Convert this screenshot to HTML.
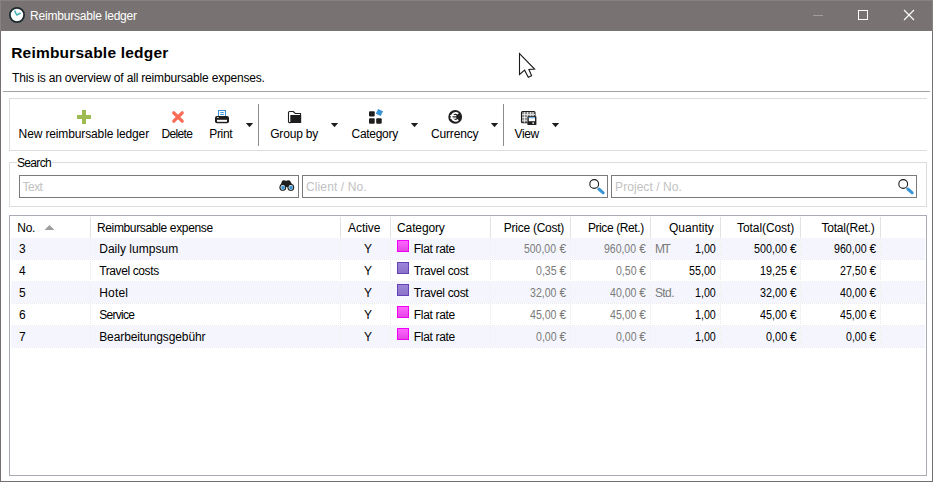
<!DOCTYPE html>
<html><head><meta charset="utf-8">
<style>
*{margin:0;padding:0;box-sizing:border-box}
html,body{width:933px;height:482px;overflow:hidden;background:#fff}
body{position:relative;font-family:"Liberation Sans",sans-serif;font-size:12px;color:#000}
.a{position:absolute;white-space:nowrap;line-height:14px;font-size:12px}
.ln{position:absolute}
svg{position:absolute;overflow:visible}
.arr{position:absolute;width:0;height:0;border-left:3.5px solid transparent;border-right:3.5px solid transparent;border-top:4px solid #1e1e1e}
.num{letter-spacing:-0.55px}
.g{color:#808080}
.dot{background-image:linear-gradient(90deg,#e9e9ec 50%,transparent 50%);background-size:2px 1px;background-position:1px 0}
.vdot{background-image:linear-gradient(180deg,#e8e8e8 50%,#fff 50%);background-size:1px 2px;background-position:0 1px}
.sm{border:1px solid #f000f0;background:linear-gradient(#ff66ff,#e446e4)}
.sp{border:1px solid #6640b6;background:linear-gradient(#9c86d8,#8a72c8)}
</style></head><body>
<!-- window frame -->
<div class="ln" style="left:0;top:0;width:933px;height:31px;background:#787372;border:1px solid #878282;border-bottom:none"></div>
<div class="ln" style="left:0;top:31px;width:1px;height:451px;background:#767170"></div>
<div class="ln" style="left:932px;top:31px;width:1px;height:451px;background:#767170"></div>
<div class="ln" style="left:0;top:481px;width:933px;height:1px;background:#767170"></div>
<!-- title icon -->
<svg style="left:0;top:0" width="40" height="31">
<circle cx="17" cy="15" r="7.1" fill="#fff" stroke="#1c2a30" stroke-width="1.8"/>
<path d="M14.6 10.6 L16.7 15 L20.6 13" fill="none" stroke="#3fb0b2" stroke-width="1.5" stroke-linejoin="round"/>
</svg>
<!-- window controls -->
<div class="ln" style="left:813px;top:15px;width:10px;height:1px;background:#a29c9c"></div>
<div class="ln" style="left:858px;top:10px;width:10px;height:10px;border:1px solid #fff"></div>
<svg style="left:0;top:0" width="933" height="31">
<path d="M904 10 L914 20 M914 10 L904 20" stroke="#fff" stroke-width="1.1"/>
</svg>
<!-- header -->
<div class="ln" style="left:3px;top:91px;width:927px;height:1px;background:#a0a0a0"></div>
<!-- toolbar -->
<div class="ln" style="left:9px;top:98px;width:918px;height:53px;border:1px solid #dcdcdc;border-right:none"></div>
<svg style="left:0;top:0" width="933" height="160">
<path d="M84 110 V124 M77 117 H91" stroke="#9dbb50" stroke-width="4"/>
<path d="M173.8 112.8 L182.2 121.2 M182.2 112.8 L173.8 121.2" stroke="#fb6b55" stroke-width="3.3" stroke-linecap="round"/>
<!-- printer -->
<rect x="218.5" y="110.5" width="7" height="6" fill="#fff" stroke="#3b90dc" stroke-width="1"/>
<path d="M220.3 112.6 H223.8 M220.3 114.5 H223.8" stroke="#3b90dc" stroke-width="1"/>
<rect x="215" y="116" width="14" height="7.3" rx="2" fill="#1e1e1e"/>
<rect x="217" y="119.8" width="10" height="2" fill="#fff"/>
<rect x="217" y="117" width="1.8" height="1" rx="0.5" fill="#ddd"/>
<!-- folder -->
<path d="M288.5 122 V112.5 Q288.5 111.5 289.5 111.5 H293.3 L295.2 113.5 H300.5 V115.5" fill="none" stroke="#1e1e1e" stroke-width="1.1"/>
<rect x="290.3" y="115" width="10.9" height="7.9" rx="0.5" fill="#1e1e1e"/>
<path d="M288.5 122 Q288.5 122.6 289.5 122.6 H291" fill="none" stroke="#1e1e1e" stroke-width="1.1"/>
<!-- category -->
<rect x="369" y="111.2" width="5.7" height="5.3" rx="1" fill="#1e1e1e"/>
<rect x="369" y="118.2" width="5.7" height="5.5" rx="1" fill="#1e1e1e"/>
<rect x="376.2" y="118.2" width="5.5" height="5.5" rx="1" fill="#1e1e1e"/>
<rect x="376.7" y="109.8" width="5.4" height="5.4" transform="rotate(25 379.4 112.5)" fill="#3a94d8"/>
<!-- currency -->
<circle cx="455.2" cy="116.9" r="6.9" fill="#1e1e1e"/>
<path d="M458.21 113.90 A3.9 3.9 0 1 0 458.21 119.70" fill="none" stroke="#fff" stroke-width="1.9"/>
<path d="M450.2 115.6 H456.3 M450.2 118.1 H456.3" stroke="#fff" stroke-width="1.2"/>
<!-- view -->
<rect x="521.5" y="111.5" width="13.5" height="11.2" rx="1" fill="#8c8c8c" stroke="#1e1e1e" stroke-width="1.1"/>
<path d="M524.5 112 V122.5 M527.5 112 V122.5 M530.5 112 V122.5 M533 112 V122.5 M522 114.5 H535 M522 117.5 H535 M522 120.3 H535" stroke="#e4e4e4" stroke-width="0.9"/>
<rect x="527.4" y="116.2" width="9" height="8.8" rx="0.6" fill="#1e1e1e"/>
<rect x="528.8" y="117.4" width="6.2" height="3.8" fill="#fff"/>
<rect x="528.8" y="117.2" width="6.2" height="1" fill="#5ab0e8"/>
<rect x="532.4" y="122.3" width="1.6" height="1.7" fill="#ddd"/>
</svg>
<div class="ln" style="left:258px;top:104px;width:1px;height:42px;background:#8c8c8c"></div>
<div class="ln" style="left:503px;top:104px;width:1px;height:42px;background:#8c8c8c"></div>
<svg style="left:0;top:0" width="933" height="140"><path d="M245.8 123 H253.2 L249.5 127.2 Z" fill="#1e1e1e"/><path d="M330.8 123 H338.2 L334.5 127.2 Z" fill="#1e1e1e"/><path d="M410.8 123 H418.2 L414.5 127.2 Z" fill="#1e1e1e"/><path d="M490.8 123 H498.2 L494.5 127.2 Z" fill="#1e1e1e"/><path d="M551.8 123 H559.2 L555.5 127.2 Z" fill="#1e1e1e"/></svg>
<!-- search group -->
<div class="ln" style="left:9px;top:162px;width:918px;height:45px;border:1px solid #dcdcdc"></div>
<div class="ln" style="left:17px;top:158px;width:35px;height:8px;background:#fff"></div>
<div class="ln" style="left:19px;top:175px;width:280px;height:23px;border:1px solid #7a7a7a"></div>
<div class="ln" style="left:302px;top:175px;width:306px;height:23px;border:1px solid #7a7a7a"></div>
<div class="ln" style="left:611px;top:175px;width:306px;height:23px;border:1px solid #7a7a7a"></div>
<svg style="left:0;top:0" width="933" height="210">
<!-- binoculars -->
<path d="M279.8 187 L282 181.2 Q282.5 180.3 283.6 180.3 L285.2 180.5 Q286.2 181.2 287 180.5 L288.7 180.3 Q289.8 180.3 290.3 181.2 L293.6 187 Z" fill="#1e1e1e"/>
<circle cx="282.8" cy="187.4" r="3.4" fill="#1e1e1e"/>
<circle cx="290.8" cy="187.4" r="3.4" fill="#1e1e1e"/>
<circle cx="282.8" cy="187.4" r="2.3" fill="#e8f4fc"/>
<circle cx="290.8" cy="187.4" r="2.3" fill="#e8f4fc"/>
<circle cx="283" cy="187.6" r="1.8" fill="#3a94d8"/>
<circle cx="291" cy="187.6" r="1.8" fill="#3a94d8"/>
<!-- magnifiers -->
<circle cx="594.2" cy="184" r="4.4" fill="none" stroke="#1e1e1e" stroke-width="1.1"/>
<path d="M598.8 189 L603.2 192.8" stroke="#3a94d8" stroke-width="3" stroke-linecap="round"/>
<circle cx="903.2" cy="184" r="4.4" fill="none" stroke="#1e1e1e" stroke-width="1.1"/>
<path d="M907.8 189 L912.2 192.8" stroke="#3a94d8" stroke-width="3" stroke-linecap="round"/>
</svg>
<!-- grid -->
<div class="ln" style="left:9px;top:215px;width:918px;height:261px;border:1px solid #a9abb4"></div>
<div class="ln" style="left:90px;top:217px;width:1px;height:21px;background:#e2e2e2"></div>
<div class="ln" style="left:340px;top:217px;width:1px;height:21px;background:#e2e2e2"></div>
<div class="ln" style="left:390px;top:217px;width:1px;height:21px;background:#e2e2e2"></div>
<div class="ln" style="left:490px;top:217px;width:1px;height:21px;background:#e2e2e2"></div>
<div class="ln" style="left:570px;top:217px;width:1px;height:21px;background:#e2e2e2"></div>
<div class="ln" style="left:650px;top:217px;width:1px;height:21px;background:#e2e2e2"></div>
<div class="ln" style="left:720px;top:217px;width:1px;height:21px;background:#e2e2e2"></div>
<div class="ln" style="left:800px;top:217px;width:1px;height:21px;background:#e2e2e2"></div>
<div class="ln" style="left:880px;top:217px;width:1px;height:21px;background:#e2e2e2"></div>
<div class="ln" style="left:11px;top:238px;width:914px;height:21px;background:#f5f6fd"></div>
<div class="ln dot" style="left:11px;top:259px;width:914px;height:1px"></div>
<div class="ln vdot" style="left:90px;top:238px;width:1px;height:21px"></div>
<div class="ln vdot" style="left:340px;top:238px;width:1px;height:21px"></div>
<div class="ln vdot" style="left:390px;top:238px;width:1px;height:21px"></div>
<div class="ln vdot" style="left:490px;top:238px;width:1px;height:21px"></div>
<div class="ln vdot" style="left:570px;top:238px;width:1px;height:21px"></div>
<div class="ln vdot" style="left:650px;top:238px;width:1px;height:21px"></div>
<div class="ln vdot" style="left:720px;top:238px;width:1px;height:21px"></div>
<div class="ln vdot" style="left:800px;top:238px;width:1px;height:21px"></div>
<div class="ln vdot" style="left:880px;top:238px;width:1px;height:21px"></div>
<div class="ln sm" style="left:397px;top:240px;width:12px;height:12px"></div>
<div class="ln dot" style="left:11px;top:281px;width:914px;height:1px"></div>
<div class="ln vdot" style="left:90px;top:260px;width:1px;height:21px"></div>
<div class="ln vdot" style="left:340px;top:260px;width:1px;height:21px"></div>
<div class="ln vdot" style="left:390px;top:260px;width:1px;height:21px"></div>
<div class="ln vdot" style="left:490px;top:260px;width:1px;height:21px"></div>
<div class="ln vdot" style="left:570px;top:260px;width:1px;height:21px"></div>
<div class="ln vdot" style="left:650px;top:260px;width:1px;height:21px"></div>
<div class="ln vdot" style="left:720px;top:260px;width:1px;height:21px"></div>
<div class="ln vdot" style="left:800px;top:260px;width:1px;height:21px"></div>
<div class="ln vdot" style="left:880px;top:260px;width:1px;height:21px"></div>
<div class="ln sp" style="left:397px;top:262px;width:12px;height:12px"></div>
<div class="ln" style="left:11px;top:282px;width:914px;height:21px;background:#f5f6fd"></div>
<div class="ln dot" style="left:11px;top:303px;width:914px;height:1px"></div>
<div class="ln vdot" style="left:90px;top:282px;width:1px;height:21px"></div>
<div class="ln vdot" style="left:340px;top:282px;width:1px;height:21px"></div>
<div class="ln vdot" style="left:390px;top:282px;width:1px;height:21px"></div>
<div class="ln vdot" style="left:490px;top:282px;width:1px;height:21px"></div>
<div class="ln vdot" style="left:570px;top:282px;width:1px;height:21px"></div>
<div class="ln vdot" style="left:650px;top:282px;width:1px;height:21px"></div>
<div class="ln vdot" style="left:720px;top:282px;width:1px;height:21px"></div>
<div class="ln vdot" style="left:800px;top:282px;width:1px;height:21px"></div>
<div class="ln vdot" style="left:880px;top:282px;width:1px;height:21px"></div>
<div class="ln sp" style="left:397px;top:284px;width:12px;height:12px"></div>
<div class="ln dot" style="left:11px;top:325px;width:914px;height:1px"></div>
<div class="ln vdot" style="left:90px;top:304px;width:1px;height:21px"></div>
<div class="ln vdot" style="left:340px;top:304px;width:1px;height:21px"></div>
<div class="ln vdot" style="left:390px;top:304px;width:1px;height:21px"></div>
<div class="ln vdot" style="left:490px;top:304px;width:1px;height:21px"></div>
<div class="ln vdot" style="left:570px;top:304px;width:1px;height:21px"></div>
<div class="ln vdot" style="left:650px;top:304px;width:1px;height:21px"></div>
<div class="ln vdot" style="left:720px;top:304px;width:1px;height:21px"></div>
<div class="ln vdot" style="left:800px;top:304px;width:1px;height:21px"></div>
<div class="ln vdot" style="left:880px;top:304px;width:1px;height:21px"></div>
<div class="ln sm" style="left:397px;top:306px;width:12px;height:12px"></div>
<div class="ln" style="left:11px;top:326px;width:914px;height:21px;background:#f5f6fd"></div>
<div class="ln dot" style="left:11px;top:347px;width:914px;height:1px"></div>
<div class="ln vdot" style="left:90px;top:326px;width:1px;height:21px"></div>
<div class="ln vdot" style="left:340px;top:326px;width:1px;height:21px"></div>
<div class="ln vdot" style="left:390px;top:326px;width:1px;height:21px"></div>
<div class="ln vdot" style="left:490px;top:326px;width:1px;height:21px"></div>
<div class="ln vdot" style="left:570px;top:326px;width:1px;height:21px"></div>
<div class="ln vdot" style="left:650px;top:326px;width:1px;height:21px"></div>
<div class="ln vdot" style="left:720px;top:326px;width:1px;height:21px"></div>
<div class="ln vdot" style="left:800px;top:326px;width:1px;height:21px"></div>
<div class="ln vdot" style="left:880px;top:326px;width:1px;height:21px"></div>
<div class="ln sm" style="left:397px;top:328px;width:12px;height:12px"></div>
<svg style="left:0;top:0" width="933" height="240"><path d="M44.5 230 L49.5 225 L54.5 230 Z" fill="#9e9e9e"/></svg>
<div class="a" style="left:30.10px;top:9px;color:#fff;letter-spacing:-0.21px">Reimbursable ledger</div>
<div class="a" style="left:11.20px;top:46px;font-size:15.5px;font-weight:bold;letter-spacing:0.21px">Reimbursable ledger</div>
<div class="a" style="left:12.10px;top:71px;letter-spacing:-0.18px">This is an overview of all reimbursable expenses.</div>
<div class="a" style="left:18.60px;top:127px;letter-spacing:-0.13px">New reimbursable ledger</div>
<div class="a" style="left:161.60px;top:127px;letter-spacing:-0.68px">Delete</div>
<div class="a" style="left:209.30px;top:127px;letter-spacing:-0.36px">Print</div>
<div class="a" style="left:270.20px;top:127px;letter-spacing:-0.17px">Group by</div>
<div class="a" style="left:351.60px;top:127px;letter-spacing:-0.30px">Category</div>
<div class="a" style="left:431.00px;top:127px;letter-spacing:-0.17px">Currency</div>
<div class="a" style="left:514.60px;top:127px;letter-spacing:-0.38px">View</div>
<div class="a" style="left:16.90px;top:156px;letter-spacing:-0.63px">Search</div>
<div class="a" style="left:22.60px;top:180px;color:#c2c2c2;letter-spacing:-0.56px">Text</div>
<div class="a" style="left:306.00px;top:180px;color:#c2c2c2;letter-spacing:0.12px">Client / No.</div>
<div class="a" style="left:615.10px;top:180px;color:#c2c2c2;letter-spacing:0.05px">Project / No.</div>
<div class="a" style="left:17.20px;top:221px;letter-spacing:-0.22px">No.</div>
<div class="a" style="left:96.90px;top:221px;letter-spacing:-0.34px">Reimbursable expense</div>
<div class="a" style="left:348.00px;top:221px;letter-spacing:-0.06px">Active</div>
<div class="a" style="left:397.10px;top:221px;letter-spacing:-0.14px">Category</div>
<div class="a" style="left:503.80px;top:221px;letter-spacing:-0.26px">Price (Cost)</div>
<div class="a" style="left:587.90px;top:221px;letter-spacing:-0.40px">Price (Ret.)</div>
<div class="a" style="left:668.90px;top:221px;letter-spacing:0.04px">Quantity</div>
<div class="a" style="left:737.10px;top:221px;letter-spacing:-0.09px">Total(Cost)</div>
<div class="a" style="left:821.40px;top:221px;letter-spacing:-0.21px">Total(Ret.)</div>
<div class="a" style="left:19.00px;top:242px">3</div>
<div class="a" style="left:99.20px;top:242px;letter-spacing:0.03px">Daily lumpsum</div>
<div class="a" style="left:364.10px;top:242px">Y</div>
<div class="a" style="left:413.80px;top:242px;letter-spacing:-0.32px">Flat rate</div>
<div class="a" style="left:524.30px;top:242px;transform:scaleX(0.870);transform-origin:0 0;color:#7a7a7a">500,00</div>
<div class="a" style="left:559.40px;top:242px;color:#7a7a7a">€</div>
<div class="a" style="left:604.10px;top:242px;transform:scaleX(0.872);transform-origin:0 0;color:#7a7a7a">960,00</div>
<div class="a" style="left:639.30px;top:242px;color:#7a7a7a">€</div>
<div class="a" style="left:694.80px;top:242px;transform:scaleX(0.891);transform-origin:0 0">1,00</div>
<div class="a" style="left:753.90px;top:242px;transform:scaleX(0.897);transform-origin:0 0">500,00</div>
<div class="a" style="left:790.00px;top:242px">€</div>
<div class="a" style="left:833.60px;top:242px;transform:scaleX(0.888);transform-origin:0 0">960,00</div>
<div class="a" style="left:869.40px;top:242px">€</div>
<div class="a" style="left:654.90px;top:242px;color:#7a7a7a;letter-spacing:-1.30px">MT</div>
<div class="a" style="left:19.00px;top:264px">4</div>
<div class="a" style="left:99.20px;top:264px;letter-spacing:-0.39px">Travel costs</div>
<div class="a" style="left:364.10px;top:264px">Y</div>
<div class="a" style="left:413.80px;top:264px;letter-spacing:-0.34px">Travel cost</div>
<div class="a" style="left:535.60px;top:264px;transform:scaleX(0.883);transform-origin:0 0;color:#7a7a7a">0,35</div>
<div class="a" style="left:559.40px;top:264px;color:#7a7a7a">€</div>
<div class="a" style="left:615.60px;top:264px;transform:scaleX(0.878);transform-origin:0 0;color:#7a7a7a">0,50</div>
<div class="a" style="left:639.30px;top:264px;color:#7a7a7a">€</div>
<div class="a" style="left:688.80px;top:264px;transform:scaleX(0.893);transform-origin:0 0">55,00</div>
<div class="a" style="left:759.80px;top:264px;transform:scaleX(0.899);transform-origin:0 0">19,25</div>
<div class="a" style="left:790.00px;top:264px">€</div>
<div class="a" style="left:839.60px;top:264px;transform:scaleX(0.886);transform-origin:0 0">27,50</div>
<div class="a" style="left:869.40px;top:264px">€</div>
<div class="a" style="left:19.00px;top:286px">5</div>
<div class="a" style="left:99.20px;top:286px;letter-spacing:0.19px">Hotel</div>
<div class="a" style="left:364.10px;top:286px">Y</div>
<div class="a" style="left:413.80px;top:286px;letter-spacing:-0.34px">Travel cost</div>
<div class="a" style="left:529.70px;top:286px;transform:scaleX(0.883);transform-origin:0 0;color:#7a7a7a">32,00</div>
<div class="a" style="left:559.40px;top:286px;color:#7a7a7a">€</div>
<div class="a" style="left:609.60px;top:286px;transform:scaleX(0.883);transform-origin:0 0;color:#7a7a7a">40,00</div>
<div class="a" style="left:639.30px;top:286px;color:#7a7a7a">€</div>
<div class="a" style="left:694.80px;top:286px;transform:scaleX(0.891);transform-origin:0 0">1,00</div>
<div class="a" style="left:759.80px;top:286px;transform:scaleX(0.899);transform-origin:0 0">32,00</div>
<div class="a" style="left:790.00px;top:286px">€</div>
<div class="a" style="left:839.60px;top:286px;transform:scaleX(0.886);transform-origin:0 0">40,00</div>
<div class="a" style="left:869.40px;top:286px">€</div>
<div class="a" style="left:654.90px;top:286px;color:#7a7a7a;letter-spacing:-0.57px">Std.</div>
<div class="a" style="left:19.00px;top:308px">6</div>
<div class="a" style="left:99.20px;top:308px;letter-spacing:-0.71px">Service</div>
<div class="a" style="left:364.10px;top:308px">Y</div>
<div class="a" style="left:413.80px;top:308px;letter-spacing:-0.32px">Flat rate</div>
<div class="a" style="left:529.70px;top:308px;transform:scaleX(0.883);transform-origin:0 0;color:#7a7a7a">45,00</div>
<div class="a" style="left:559.40px;top:308px;color:#7a7a7a">€</div>
<div class="a" style="left:609.60px;top:308px;transform:scaleX(0.883);transform-origin:0 0;color:#7a7a7a">45,00</div>
<div class="a" style="left:639.30px;top:308px;color:#7a7a7a">€</div>
<div class="a" style="left:694.80px;top:308px;transform:scaleX(0.891);transform-origin:0 0">1,00</div>
<div class="a" style="left:759.80px;top:308px;transform:scaleX(0.899);transform-origin:0 0">45,00</div>
<div class="a" style="left:790.00px;top:308px">€</div>
<div class="a" style="left:839.60px;top:308px;transform:scaleX(0.886);transform-origin:0 0">45,00</div>
<div class="a" style="left:869.40px;top:308px">€</div>
<div class="a" style="left:19.00px;top:330px">7</div>
<div class="a" style="left:99.20px;top:330px;letter-spacing:-0.10px">Bearbeitungsgebühr</div>
<div class="a" style="left:364.10px;top:330px">Y</div>
<div class="a" style="left:413.80px;top:330px;letter-spacing:-0.32px">Flat rate</div>
<div class="a" style="left:535.60px;top:330px;transform:scaleX(0.883);transform-origin:0 0;color:#7a7a7a">0,00</div>
<div class="a" style="left:559.40px;top:330px;color:#7a7a7a">€</div>
<div class="a" style="left:615.60px;top:330px;transform:scaleX(0.878);transform-origin:0 0;color:#7a7a7a">0,00</div>
<div class="a" style="left:639.30px;top:330px;color:#7a7a7a">€</div>
<div class="a" style="left:694.80px;top:330px;transform:scaleX(0.891);transform-origin:0 0">1,00</div>
<div class="a" style="left:765.60px;top:330px;transform:scaleX(0.908);transform-origin:0 0">0,00</div>
<div class="a" style="left:790.00px;top:330px">€</div>
<div class="a" style="left:845.60px;top:330px;transform:scaleX(0.883);transform-origin:0 0">0,00</div>
<div class="a" style="left:869.40px;top:330px">€</div>
<svg style="left:0;top:0" width="933" height="100"><path d="M519.5 53.5 L519.5 74.5 L524.6 70.2 L528.3 77.2 L531.6 75.8 L528.9 69.4 L534.6 69.1 Z" fill="#fff" stroke="#1a1a1a" stroke-width="1.1" stroke-linejoin="miter"/></svg>
</body></html>
